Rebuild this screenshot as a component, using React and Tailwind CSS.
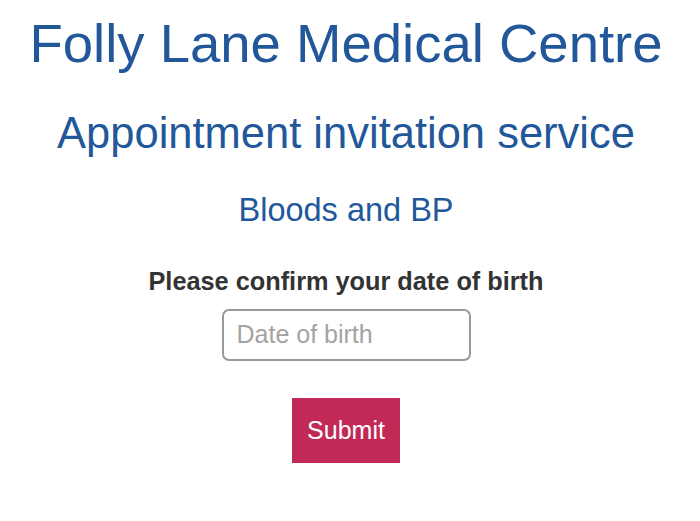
import React, { useState } from 'react';

const App = () => {
  const [dob, setDob] = useState('');

  return (
    <div
      className="min-h-[521px] bg-white flex flex-col items-center text-center pr-[8px]"
      style={{ fontFamily: '"Liberation Sans", Arial, sans-serif' }}
    >
      <h1 className="mt-[17px] text-[54.5px] leading-none text-[#22589a] font-normal">
        Folly Lane Medical Centre
      </h1>
      <h2 className="mt-[40px] text-[43.5px] leading-none text-[#22589a] font-normal">
        Appointment invitation service
      </h2>
      <h3 className="mt-[39px] text-[32.5px] leading-none text-[#22589a] font-normal">
        Bloods and BP
      </h3>
      <form
        className="mt-[42px] flex flex-col items-center"
        onSubmit={(e) => e.preventDefault()}
      >
        <label htmlFor="dob" className="text-[25.3px] leading-none font-bold text-[#333333]">
          Please confirm your date of birth
        </label>
        <input
          id="dob"
          type="text"
          value={dob}
          onChange={(e) => setDob(e.target.value)}
          placeholder="Date of birth"
          className="mt-[15px] w-[249px] h-[52px] px-[13px] border-2 border-[#9a9a9a] rounded-[7px] text-[25px] text-[#333333] placeholder:text-[#a3a3a3] focus:outline-none"
        />
        <button
          type="submit"
          className="mt-[37px] w-[108px] h-[65px] bg-[#c12a57] text-white text-[25px] leading-none"
        >
          Submit
        </button>
      </form>
    </div>
  );
};

export default App;
